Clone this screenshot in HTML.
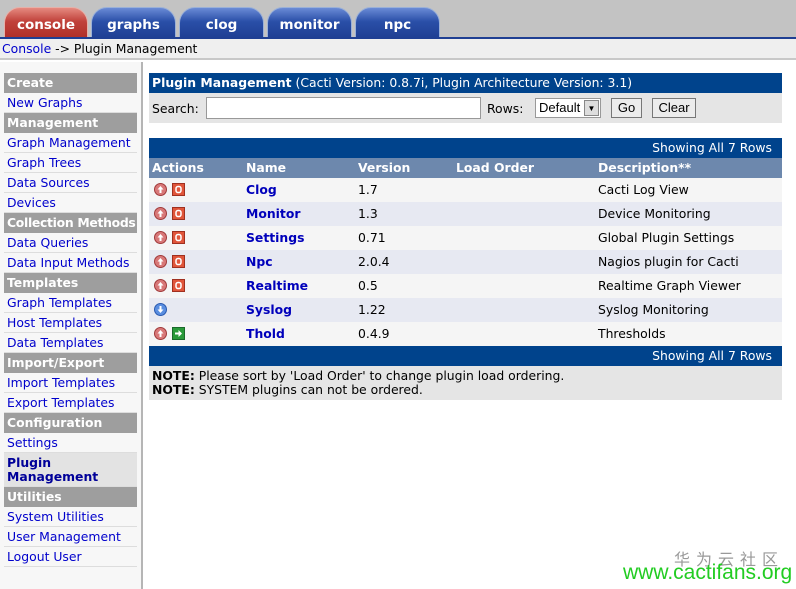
<!DOCTYPE html><html><head><style>
*{margin:0;padding:0;box-sizing:border-box}
body{width:796px;height:589px;overflow:hidden;background:#fff;font-family:"DejaVu Sans","Liberation Sans",sans-serif;font-size:12.4px;position:relative;color:#000}
.a{position:absolute}
.tab{position:absolute;top:7px;height:32px;border-radius:16px 16px 0 0;color:#fff;font-weight:bold;font-size:13.5px;text-align:center;line-height:34px;background:linear-gradient(#6a8bd6,#2a4fa8 45%,#1f3f93);border:1px solid #9ab0d8}
.side div{position:absolute;left:4px;width:133px;height:20px;line-height:20px;padding-left:3px;color:#0000cc;border-bottom:1px solid #ddd;white-space:nowrap;overflow:hidden}
.side .h{background:#9e9e9e;color:#fff;font-weight:bold;border:none}
.row{position:absolute;left:149px;width:633px;height:24px;line-height:24px}
.row span{position:absolute}
.n{left:97px;color:#0000bb;font-weight:bold}
.v{left:209px}.d{left:449px}
.ic{position:absolute;top:5px;width:13px;height:13px}
</style></head><body>
<div class="a" style="left:0;top:0;width:796px;height:39px;background:#c3c3c3"></div>
<div class="tab" style="left:4px;width:84px;background:linear-gradient(#e58a80,#c0413a 45%,#b03028);border-color:#e6b0a8">console</div>
<div class="tab" style="left:91px;width:85px">graphs</div>
<div class="tab" style="left:179px;width:85px">clog</div>
<div class="tab" style="left:267px;width:85px">monitor</div>
<div class="tab" style="left:355px;width:85px">npc</div>
<div class="a" style="left:0;top:37px;width:796px;height:2px;background:#1f3f93"></div>
<div class="a" style="left:0;top:39px;width:796px;height:21px;background:#efefef;border-bottom:2px solid #c8c8c8;line-height:20px;padding-left:2px"><span style="color:#0000cc">Console</span> -&gt; Plugin Management</div>
<div class="a" style="left:0;top:62px;width:143px;height:527px;background:#f7f7f7;border-right:2px solid #b5b5b5"></div>
<div class="side">
<div class="h" style="top:73px">Create</div>
<div style="top:93px">New Graphs</div>
<div class="h" style="top:113px">Management</div>
<div style="top:133px">Graph Management</div>
<div style="top:153px">Graph Trees</div>
<div style="top:173px">Data Sources</div>
<div style="top:193px">Devices</div>
<div class="h" style="top:213px;letter-spacing:-0.3px">Collection Methods</div>
<div style="top:233px">Data Queries</div>
<div style="top:253px">Data Input Methods</div>
<div class="h" style="top:273px">Templates</div>
<div style="top:293px">Graph Templates</div>
<div style="top:313px">Host Templates</div>
<div style="top:333px">Data Templates</div>
<div class="h" style="top:353px">Import/Export</div>
<div style="top:373px">Import Templates</div>
<div style="top:393px">Export Templates</div>
<div class="h" style="top:413px">Configuration</div>
<div style="top:433px">Settings</div>
<div style="top:453px;height:34px;line-height:14px;padding-top:3px;font-weight:bold;color:#000099;background:#e3e3e3">Plugin<br>Management</div>
<div class="h" style="top:487px">Utilities</div>
<div style="top:507px">System Utilities</div>
<div style="top:527px">User Management</div>
<div style="top:547px">Logout User</div>
</div>
<div class="a" style="left:149px;top:73px;width:633px;height:20px;background:#00438c;color:#fff;line-height:20px;padding-left:3px"><b>Plugin Management</b> (Cacti Version: 0.8.7i, Plugin Architecture Version: 3.1)</div>
<div class="a" style="left:149px;top:93px;width:633px;height:30px;background:#e5e5e5"></div>
<div class="a" style="left:152px;top:101px">Search:</div>
<div class="a" style="left:206px;top:97px;width:275px;height:22px;background:#fff;border:1px solid #999"></div>
<div class="a" style="left:487px;top:101px">Rows:</div>
<div class="a" style="left:535px;top:98px;width:66px;height:20px;background:#fff;border:1px solid #999;font-family:'Liberation Sans';font-size:13px;line-height:18px;padding-left:3px">Default<span class="a" style="right:1px;top:1px;width:15px;height:16px;background:#ddd;border:1px solid #888;font-size:8px;text-align:center;line-height:16px">▼</span></div>
<div class="a" style="left:611px;top:98px;width:31px;height:20px;background:#ececec;border:1px solid #777;font-family:'Liberation Sans';font-size:13px;text-align:center;line-height:18px">Go</div>
<div class="a" style="left:652px;top:98px;width:44px;height:20px;background:#ececec;border:1px solid #777;font-family:'Liberation Sans';font-size:13px;text-align:center;line-height:18px">Clear</div>
<div class="a" style="left:149px;top:138px;width:633px;height:20px;background:#00438c;color:#fff;line-height:20px;text-align:right;padding-right:10px">Showing All 7 Rows</div>
<div class="row" style="top:158px;height:20px;line-height:20px;background:#6d88ad;color:#fff;font-weight:bold"><span style="left:3px">Actions</span><span style="left:97px">Name</span><span class="v">Version</span><span style="left:307px">Load Order</span><span class="d">Description**</span></div>
<svg width="0" height="0" style="position:absolute"><defs>
<g id="up"><circle cx="6.5" cy="6.5" r="6" fill="#d87878" stroke="#a03a3a"/><path d="M6.5 3L3.5 6.5H5.5V10H7.5V6.5H9.5Z" fill="#fff"/></g>
<g id="off"><rect x="0.5" y="0.5" width="12" height="12" fill="#e0553a" stroke="#a03020"/><rect x="4" y="3.5" width="5" height="6" rx="2" fill="none" stroke="#fff" stroke-width="1.5"/></g>
</defs></svg>
<div class="row" style="top:178px;background:#f5f5f5"><svg class="ic" style="left:5px"><use href="#up"/></svg><svg class="ic" style="left:23px"><use href="#off"/></svg><span class="n">Clog</span><span class="v">1.7</span><span class="d">Cacti Log View</span></div>
<div class="row" style="top:202px;background:#e7e9f2"><svg class="ic" style="left:5px"><use href="#up"/></svg><svg class="ic" style="left:23px"><use href="#off"/></svg><span class="n">Monitor</span><span class="v">1.3</span><span class="d">Device Monitoring</span></div>
<div class="row" style="top:226px;background:#f5f5f5"><svg class="ic" style="left:5px"><use href="#up"/></svg><svg class="ic" style="left:23px"><use href="#off"/></svg><span class="n">Settings</span><span class="v">0.71</span><span class="d">Global Plugin Settings</span></div>
<div class="row" style="top:250px;background:#e7e9f2"><svg class="ic" style="left:5px"><use href="#up"/></svg><svg class="ic" style="left:23px"><use href="#off"/></svg><span class="n">Npc</span><span class="v">2.0.4</span><span class="d">Nagios plugin for Cacti</span></div>
<div class="row" style="top:274px;background:#f5f5f5"><svg class="ic" style="left:5px"><use href="#up"/></svg><svg class="ic" style="left:23px"><use href="#off"/></svg><span class="n">Realtime</span><span class="v">0.5</span><span class="d">Realtime Graph Viewer</span></div>
<div class="row" style="top:298px;background:#e7e9f2"><svg class="ic" style="left:5px"><circle cx="6.5" cy="6.5" r="6" fill="#5a8ee0" stroke="#2a5ab0"/><path d="M6.5 10L3.5 6.5H5.5V3H7.5V6.5H9.5Z" fill="#fff"/></svg><span class="n">Syslog</span><span class="v">1.22</span><span class="d">Syslog Monitoring</span></div>
<div class="row" style="top:322px;background:#f5f5f5"><svg class="ic" style="left:5px"><use href="#up"/></svg><svg class="ic" style="left:23px"><rect x="0.5" y="0.5" width="12" height="12" fill="#2a9a3a" stroke="#1a6a2a"/><path d="M3 5.5H6.5V3L10 6.5L6.5 10V7.5H3Z" fill="#fff"/></svg><span class="n">Thold</span><span class="v">0.4.9</span><span class="d">Thresholds</span></div>
<div class="a" style="left:149px;top:346px;width:633px;height:20px;background:#00438c;color:#fff;line-height:20px;text-align:right;padding-right:10px">Showing All 7 Rows</div>
<div class="a" style="left:149px;top:366px;width:633px;height:34px;background:#e5e5e5;padding:3px 0 0 3px;line-height:14px"><b>NOTE:</b> Please sort by 'Load Order' to change plugin load ordering.<br><b>NOTE:</b> SYSTEM plugins can not be ordered.</div>
<div class="a" style="left:674px;top:546px;color:#999;font-family:'Noto Sans CJK SC',sans-serif;font-size:16px;letter-spacing:6px">华为云社区</div>
<div class="a" style="left:623px;top:561px;color:#22cc22;font-family:'Liberation Sans',sans-serif;font-size:21px">www.cactifans.org</div>
</body></html>
